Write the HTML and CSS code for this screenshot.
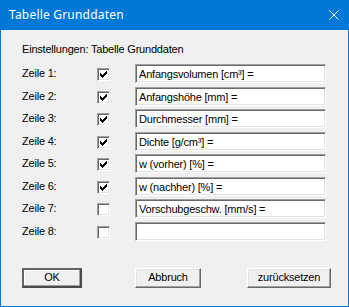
FILE: index.html
```html
<!DOCTYPE html>
<html>
<head>
<meta charset="utf-8">
<link rel="stylesheet" href="styles.css">
</head>
<body>
<div class="window">
  <div class="titlebar">
    <span class="title">Tabelle Grunddaten</span>
    <svg class="close" width="10" height="10" viewBox="0 0 10 10"><path d="M0.5 0.5L9.5 9.5M9.5 0.5L0.5 9.5" stroke="#fff" stroke-width="1" fill="none"/></svg>
  </div>
  <div class="body">
    <div class="heading">Einstellungen: Tabelle Grunddaten</div>
    <div class="rows">
      <div class="label">Zeile 1:</div>
      <div class="cb"><svg width="7" height="7" viewBox="0 0 7 7"><path d="M0 2h1v3H0z M1 3h1v3H1z M2 4h1v3H2z M3 3h1v3H3z M4 2h1v3H4z M5 1h1v3H5z M6 0h1v3H6z" fill="#000"/></svg></div>
      <div class="field">Anfangsvolumen [cm³] =</div>

      <div class="label">Zeile 2:</div>
      <div class="cb"><svg width="7" height="7" viewBox="0 0 7 7"><path d="M0 2h1v3H0z M1 3h1v3H1z M2 4h1v3H2z M3 3h1v3H3z M4 2h1v3H4z M5 1h1v3H5z M6 0h1v3H6z" fill="#000"/></svg></div>
      <div class="field">Anfangshöhe [mm] =</div>

      <div class="label">Zeile 3:</div>
      <div class="cb"><svg width="7" height="7" viewBox="0 0 7 7"><path d="M0 2h1v3H0z M1 3h1v3H1z M2 4h1v3H2z M3 3h1v3H3z M4 2h1v3H4z M5 1h1v3H5z M6 0h1v3H6z" fill="#000"/></svg></div>
      <div class="field">Durchmesser [mm] =</div>

      <div class="label">Zeile 4:</div>
      <div class="cb"><svg width="7" height="7" viewBox="0 0 7 7"><path d="M0 2h1v3H0z M1 3h1v3H1z M2 4h1v3H2z M3 3h1v3H3z M4 2h1v3H4z M5 1h1v3H5z M6 0h1v3H6z" fill="#000"/></svg></div>
      <div class="field">Dichte [g/cm³] =</div>

      <div class="label">Zeile 5:</div>
      <div class="cb"><svg width="7" height="7" viewBox="0 0 7 7"><path d="M0 2h1v3H0z M1 3h1v3H1z M2 4h1v3H2z M3 3h1v3H3z M4 2h1v3H4z M5 1h1v3H5z M6 0h1v3H6z" fill="#000"/></svg></div>
      <div class="field">w (vorher) [%] =</div>

      <div class="label">Zeile 6:</div>
      <div class="cb"><svg width="7" height="7" viewBox="0 0 7 7"><path d="M0 2h1v3H0z M1 3h1v3H1z M2 4h1v3H2z M3 3h1v3H3z M4 2h1v3H4z M5 1h1v3H5z M6 0h1v3H6z" fill="#000"/></svg></div>
      <div class="field">w (nachher) [%] =</div>

      <div class="label">Zeile 7:</div>
      <div class="cb"></div>
      <div class="field">Vorschubgeschw. [mm/s] =</div>

      <div class="label">Zeile 8:</div>
      <div class="cb"></div>
      <div class="field"></div>
    </div>
    <div class="buttons">
      <div class="btn btn-ok">OK</div>
      <div class="btn btn-cancel">Abbruch</div>
      <div class="btn btn-reset">zurücksetzen</div>
    </div>
  </div>
</div>
</body>
</html>
```
FILE: styles.css
```css
html, body {
  margin: 0;
  padding: 0;
  background: #f0f0f0;
}
.window {
  width: 349px;
  height: 307px;
  display: flex;
  flex-direction: column;
}
.titlebar {
  height: 30px;
  background: #0078d7;
  display: flex;
  align-items: center;
  justify-content: space-between;
  padding: 0 10px 0 9px;
  box-sizing: border-box;
  flex: none;
}
.title {
  color: #fff;
  font-family: "Noto Sans", sans-serif;
  font-size: 12px;
  line-height: 16px;
  letter-spacing: 0.2px;
}
.close {
  display: block;
}
.body {
  flex: 1;
  border: 1px solid #0078d7;
  border-top: 0;
  background: #f0f0f0;
  font-family: "Liberation Sans", Arial, sans-serif;
  font-size: 11px;
  letter-spacing: -0.2px;
  color: #000;
  padding-left: 21px;
  display: flex;
  flex-direction: column;
}
.heading {
  margin-top: 13px;
  line-height: 13px;
  height: 13px;
}
.rows {
  margin-top: 8px;
  display: grid;
  grid-template-columns: 75px 38px 191px;
  grid-auto-rows: 22.57px;
  align-items: start;
}
.label {
  line-height: 19px;
  height: 19px;
}
.cb {
  width: 13px;
  height: 13px;
  box-sizing: border-box;
  margin-top: 4px;
  background: #fff;
  border: 1px solid;
  border-color: #a0a0a0 #fff #fff #a0a0a0;
  box-shadow: inset 1px 1px 0 #696969, inset -1px -1px 0 #e3e3e3;
  display: flex;
  align-items: center;
  justify-content: center;
}
.cb svg {
  display: block;
  shape-rendering: crispEdges;
}
.field {
  height: 19px;
  box-sizing: border-box;
  background: #fff;
  border: 1px solid;
  border-color: #a0a0a0 #fff #fff #a0a0a0;
  box-shadow: inset 1px 1px 0 #696969, inset -1px -1px 0 #e3e3e3;
  padding: 2px 3px 0 3px;
  line-height: 15px;
  white-space: nowrap;
  overflow: hidden;
}
.buttons {
  margin-top: 23px;
  display: flex;
  align-items: flex-start;
}
.btn {
  height: 20px;
  box-sizing: border-box;
  border: 1px solid;
  border-color: #fff #696969 #696969 #fff;
  box-shadow: inset -1px -1px 0 #a0a0a0, inset 1px 1px 0 #e3e3e3;
  background: #f0f0f0;
  text-align: center;
  line-height: 17px;
  font-size: 11px;
}
.btn-ok {
  width: 60px;
  border: 2px solid;
  border-color: #646464 #4a4a4a #4a4a4a #646464;
  box-shadow: inset -1px -1px 0 #a0a0a0, inset 1px 1px 0 #fff;
  line-height: 15px;
}
.btn-cancel {
  width: 66px;
  margin-left: 53px;
}
.btn-reset {
  width: 84px;
  margin-left: 46px;
}
```
